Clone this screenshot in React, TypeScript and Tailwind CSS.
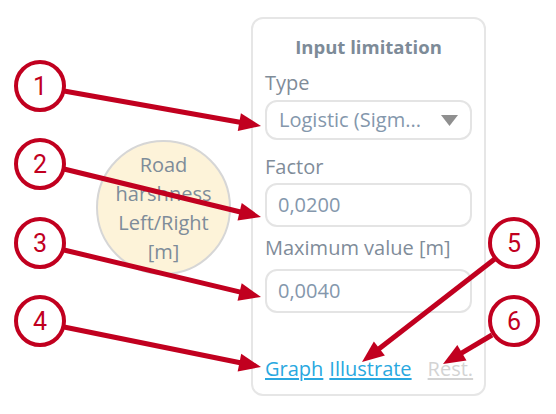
import React from 'react'

const RED = '#c1001f'

type Arrow = { x1: number; y1: number; x2: number; y2: number }

const arrows: Arrow[] = [
  { x1: 64, y1: 91, x2: 261, y2: 126 },
  { x1: 64, y1: 169, x2: 261, y2: 217 },
  { x1: 64, y1: 250, x2: 261, y2: 297 },
  { x1: 64, y1: 327, x2: 261, y2: 367 },
  { x1: 496, y1: 258, x2: 362, y2: 362 },
  { x1: 492, y1: 335, x2: 443, y2: 364 },
]

const badges = [
  { n: 1, x: 40, y: 86 },
  { n: 2, x: 40, y: 164 },
  { n: 3, x: 40, y: 243 },
  { n: 4, x: 40, y: 321 },
  { n: 5, x: 514, y: 243 },
  { n: 6, x: 514, y: 321 },
]

function ArrowShape({ x1, y1, x2, y2 }: Arrow) {
  const dx = x2 - x1
  const dy = y2 - y1
  const len = Math.hypot(dx, dy)
  const ux = dx / len
  const uy = dy / len
  const head = 22
  const half = 9
  const bx = x2 - ux * head
  const by = y2 - uy * head
  const pts = [
    `${x2},${y2}`,
    `${bx - uy * half},${by + ux * half}`,
    `${bx + uy * half},${by - ux * half}`,
  ].join(' ')
  return (
    <g>
      <line x1={x1} y1={y1} x2={bx + ux * 2} y2={by + uy * 2} stroke={RED} strokeWidth={5} />
      <polygon points={pts} fill={RED} />
    </g>
  )
}

function Field({ value }: { value: string }) {
  return (
    <div className="flex h-[44px] items-center rounded-[12px] border-2 border-[#e4e4e4] px-[11px] text-[20px] text-[#8497ac]">
      {value}
    </div>
  )
}

export default function App() {
  return (
    <div
      className="relative h-[414px] w-[556px] overflow-hidden bg-white"
      style={{ fontFamily: '"Open Sans", Roboto, sans-serif' }}
    >
      <div className="flex items-start">
        <div className="ml-[96px] mt-[140px] flex h-[135px] w-[135px] flex-col items-center justify-center rounded-full border-2 border-[#d6d6d6] bg-[#fdf3d9] text-center text-[20px] leading-[29px] text-[#7e8c99]">
          <span>Road</span>
          <span>harshness</span>
          <span>Left/Right</span>
          <span>[m]</span>
        </div>

        <div className="ml-[20px] mt-[17px] flex h-[379px] w-[235px] flex-col rounded-[12px] border-2 border-[#e6e6e6] px-[12px] pt-[17px]">
          <div className="text-center text-[18.5px] font-bold leading-[22px] text-[#7d8b98]">
            Input limitation
          </div>

          <div className="mt-[13px] text-[20px] leading-[24px] text-[#7f8c99]">Type</div>
          <div className="mt-[5px] flex h-[40px] items-center justify-between rounded-[12px] border-2 border-[#e4e4e4] pl-[12px] pr-[12px] text-[20px] text-[#8497ac]">
            <span className="whitespace-nowrap">Logistic (Sigm...</span>
            <svg width="17" height="11" viewBox="0 0 17 11" className="shrink-0">
              <polygon points="0,0 17,0 8.5,11" fill="#8f8f8f" />
            </svg>
          </div>

          <div className="mt-[15px] text-[20px] leading-[24px] text-[#7f8c99]">Factor</div>
          <div className="mt-[4px]">
            <Field value="0,0200" />
          </div>

          <div className="mt-[9px] whitespace-nowrap text-[20px] leading-[24px] text-[#7f8c99]">
            Maximum value [m]
          </div>
          <div className="mt-[9px]">
            <Field value="0,0040" />
          </div>

          <div className="mt-[44px] flex items-center whitespace-nowrap text-[20px] leading-[24px]">
            <span className="text-[#29a8e0] underline underline-offset-2">Graph</span>
            <span className="ml-[6px] text-[#29a8e0] underline underline-offset-2">Illustrate</span>
            <span className="ml-[16px] text-[#d3d3d3] underline underline-offset-2">Rest.</span>
          </div>
        </div>
      </div>

      <svg className="pointer-events-none absolute inset-0" width="556" height="414">
        {arrows.map((a, i) => (
          <ArrowShape key={i} {...a} />
        ))}
        {badges.map((b) => (
          <g key={b.n}>
            <circle cx={b.x} cy={b.y} r={24} fill="white" stroke={RED} strokeWidth={4} />
            <text
              x={b.x}
              y={b.y + 9}
              textAnchor="middle"
              fontSize="25"
              fill={RED}
              fontFamily="Roboto, sans-serif"
            >
              {b.n}
            </text>
          </g>
        ))}
      </svg>
    </div>
  )
}
